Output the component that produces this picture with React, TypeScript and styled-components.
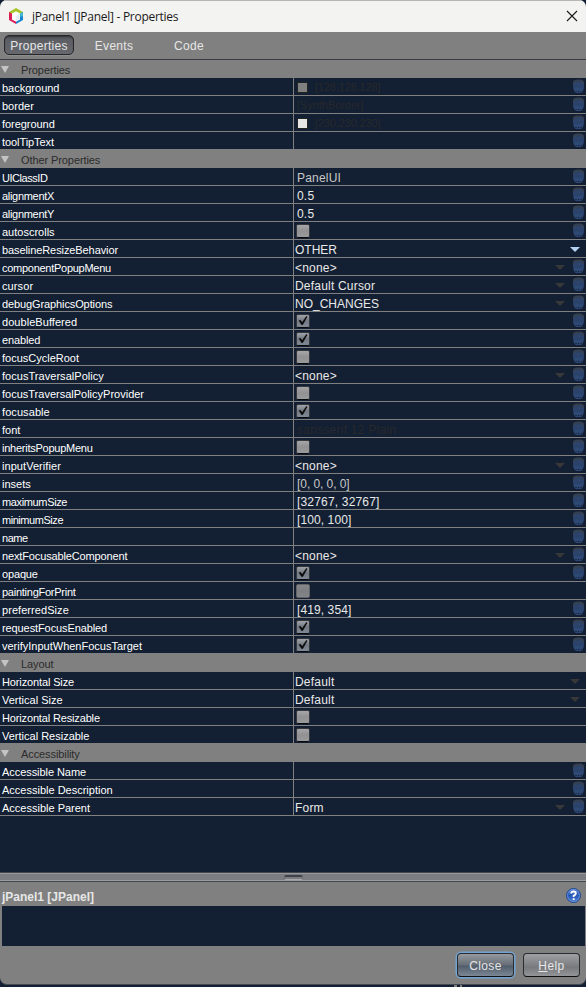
import React from "react";
import styled, { createGlobalStyle, css } from "styled-components";

const navy = "#131f32";
const gray = "#808080";

const Global = createGlobalStyle`
  html, body { margin: 0; padding: 0; background: ${navy}; }
  * { box-sizing: border-box; }
  body { font-family: "Liberation Sans", Arial, sans-serif; overflow: hidden; }
`;

const Page = styled.div`
  width: 586px;
  height: 987px;
  background: ${navy};
  overflow: hidden;
`;

const Dialog = styled.main`
  width: 586px;
  height: 985px;
  display: flex;
  flex-direction: column;
  overflow: hidden;
  border-radius: 7px;
  border-bottom: 1px solid #454a52;
  background: ${gray};
`;

const TitleBar = styled.header`
  height: 32px;
  flex: none;
  display: flex;
  align-items: center;
  padding: 0 8px 2px;
  border-top: 1px solid #b5b5b5;
  background: #f3f3f2;
`;

const Title = styled.h1`
  flex: 1;
  margin: 2px 0 0 8px;
  color: #1a1a1a;
  font: 400 12px/16px "Open Sans", "Noto Sans", sans-serif;
  letter-spacing: -0.28px;
`;

const CloseIcon = styled.button`
  display: flex;
  padding: 0;
  border: 0;
  background: none;
`;

const Tabs = styled.nav`
  height: 28px;
  flex: none;
  display: flex;
  align-items: flex-start;
  padding: 3px 4px 0;
  border-bottom: 1px solid #393d43;
`;

const Tab = styled.button<{ $active?: boolean; $width: number }>`
  width: ${(p) => p.$width}px;
  height: 20px;
  padding: 1px 0 0;
  border: 1px solid transparent;
  border-radius: 5px;
  background: transparent;
  color: #e6e6e6;
  font: 12px/18px "Liberation Sans", Arial, sans-serif;
  letter-spacing: 0.28px;
  ${(p) =>
    p.$active &&
    css`
      border-color: #26282c;
      background: linear-gradient(#4a4c51, #5c5e64 20%, #66686e);
      box-shadow: inset 0 1px 1px #36383c, 0 1px 0 #8d8d8d;
    `}
`;

const Sheet = styled.section`
  height: 812px;
  flex: none;
  background: ${navy};
`;

const GroupHeader = styled.h2`
  height: 18px;
  margin: 0;
  display: flex;
  align-items: center;
  padding: 2px 0 0 1px;
  background: ${gray};
  color: #2b2b2b;
  font: 400 11px/16px "Liberation Sans", Arial, sans-serif;
  letter-spacing: -0.09px;
`;

const GroupArrow = styled.span`
  width: 0;
  height: 0;
  margin: 0 12px 2px 0;
  border: solid transparent;
  border-width: 7px 4px 0;
  border-top-color: #c4c4c4;
`;

const Row = styled.div`
  height: 18px;
  display: grid;
  grid-template: 17px / 293px 1fr;
  border-bottom: 1px solid ${gray};
`;

const Name = styled.div<{ $spacing: number }>`
  padding: 2px 0 0 2px;
  color: #fff;
  font-size: 11px;
  line-height: 16px;
  white-space: nowrap;
  letter-spacing: ${(p) => p.$spacing}px;
`;

const Value = styled.div`
  height: 17px;
  display: flex;
  border-left: 1px solid ${gray};
`;

const ValueText = styled.span<{ $inset: number; $tone: string; $spacing: number; $small?: boolean }>`
  flex: 1;
  padding-left: ${(p) => p.$inset}px;
  color: ${(p) => p.$tone};
  font-size: ${(p) => (p.$small ? 11 : 12)}px;
  line-height: ${(p) => (p.$small ? 19 : 20)}px;
  letter-spacing: ${(p) => p.$spacing}px;
  white-space: nowrap;
`;

const Swatch = styled.span<{ $color: string }>`
  width: 11px;
  height: 11px;
  margin: 4px 0 0 3px;
  border: 1px solid #242424;
  background: ${(p) => p.$color};
`;

const Check = styled.span`
  width: 14px;
  height: 15px;
  margin: 2px auto 0 2px;
`;

const DropArrow = styled.span<{ $active?: boolean; $end: number }>`
  width: 0;
  height: 0;
  margin: 7px ${(p) => p.$end}px 0 0;
  border: solid transparent;
  border-width: 5px 5px 0;
  border-top-color: ${(p) => (p.$active ? "#b5d3f1" : "#383838")};
`;

const Bulb = styled.span`
  width: 14px;
  height: 17px;
`;

const Splitter = styled.div`
  height: 10px;
  flex: none;
  display: flex;
  justify-content: center;
  align-items: center;
  border: solid #42464d;
  border-width: 1px 0;
  background: linear-gradient(#96989c 0 1px, #7b7d82 1px 7px, #9b9da0 7px);
`;

const Grip = styled.span`
  width: 19px;
  height: 5px;
  border: 1px solid #666a71;
  border-top: 2px solid #3f4248;
  border-bottom-color: #a8a8a8;
  border-radius: 2px;
`;

const InfoHeader = styled.div`
  height: 24px;
  flex: none;
  display: flex;
  justify-content: space-between;
  align-items: flex-start;
  padding: 5px 4px 0 2px;
`;

const InfoTitle = styled.strong`
  color: #e6e6e6;
  font-size: 12px;
  line-height: 20px;
`;

const Description = styled.div`
  height: 40px;
  flex: none;
  margin: 0 1px 0 2px;
  background: ${navy};
`;

const Actions = styled.footer`
  display: flex;
  justify-content: flex-end;
  gap: 9px;
  padding: 7px 6px 0 0;
`;

const Action = styled.button<{ $primary?: boolean }>`
  width: 57px;
  height: 24px;
  padding: 2px 0 0;
  border: 1px solid #292c31;
  border-bottom-color: #0d0f12;
  border-radius: 4px;
  background: linear-gradient(#a0a0a2, #86878a 40%, #77797d 60%, #949598);
  color: #e6e6e6;
  font: 12px/20px "Liberation Sans", Arial, sans-serif;
  letter-spacing: 0.4px;
  ${(p) =>
    p.$primary &&
    css`
      background: linear-gradient(#969a9f, #686f78 48%, #515d6b 55%, #7b8794);
      box-shadow: 0 0 0 1.5px #73a4d1;
    `}
`;

const Backdrop = styled.div`
  height: 2px;
  display: flex;
  gap: 3px;
  padding-left: 454px;
`;

const SashLine = styled.span<{ $width: number }>`
  width: ${(p) => p.$width}px;
  background: ${gray};
`;

type BoxState = "on" | "off" | "disabled";

const boxFill: Record<BoxState, [string, string, string]> = {
  on: ["#a3a6aa", "#737a84", "#808a96"],
  off: ["#a8a8a9", "#919193", "#9a9b9d"],
  disabled: ["#86878a", "#7d7e82", "#84868a"],
};

function CheckBox({ state }: { state: BoxState }) {
  const [top, middle, bottom] = boxFill[state];
  const disabled = state === "disabled";
  return (
    <Check>
      <svg width="14" height="15" viewBox="0 0 14 15" display="block">
        <defs>
          <linearGradient id={`box-${state}`} x1="0" y1="0" x2="0" y2="1">
            <stop offset="0" stopColor={top} />
            <stop offset=".5" stopColor={middle} />
            <stop offset="1" stopColor={bottom} />
          </linearGradient>
        </defs>
        <rect x=".5" y=".5" width="13" height="13" rx="1.5" fill={`url(#box-${state})`} stroke={disabled ? "#606368" : "#34373c"} />
        {!disabled && <path d="M1.5 13.5h11" stroke="#07090d" />}
        {state === "on" && (
          <path d="M3 6.8l1.3-.7 1.9 2.3 4.2-6.1.8.5-4.5 7.9H5.7z" fill="#080808" stroke="#080808" strokeWidth=".4" />
        )}
      </svg>
    </Check>
  );
}

function BulbIcon() {
  return (
    <Bulb>
      <svg width="14" height="17" viewBox="0 0 14 17" display="block">
        <defs>
          <linearGradient id="bulb" x1="0" y1="0" x2="0" y2="1">
            <stop offset="0" stopColor="#303d53" />
            <stop offset=".3" stopColor="#2d456d" />
            <stop offset=".52" stopColor="#2a4169" />
            <stop offset=".7" stopColor="#2f4a78" />
            <stop offset="1" stopColor="#2b446f" />
          </linearGradient>
        </defs>
        <path d="M1.2 9.5q.3 2.3 1.3 3.5.2 2.7 1.8 2.7h4.4q1.6 0 1.8-2.7 1-1.2 1.3-3.5" fill="#0c1422" stroke="#0c1422" strokeWidth=".8" />
        <path d="M4.2 1.8h4.6Q12 2.2 12 5v4q0 2-1 3.8-.4 2.4-2.2 2.4H4.2Q2.400 15.200 2 12.800 1 11 1 9V5q0-2.800 3.200-3.200z" fill="url(#bulb)" />
        <path d="M1.5 6V5Q1.600 2.500 4.300 2.200h4.400q2.700.3 2.800 2.800v1" fill="none" stroke="#3d3f43" strokeWidth=".9" />
        <path d="M3.500 13h1v1h-1zm5 0h1v1h-1zM6 13h1v1H6z" fill="#111c30" />
      </svg>
    </Bulb>
  );
}

function LogoIcon() {
  return (
    <svg width="16" height="18" viewBox="0 0 16 18">
      <path d="M8 1l7 4v4L8 6 1 9V5z" fill="#a7c52b" />
      <path d="M1 5l3 1.7v5.7l4 2.2V17l-7-4z" fill="#de1c55" />
      <path d="M8 17l7-4V5l-3 1.7v5.7l-4 2.2z" fill="#1982cf" />
      <path d="M12 6.5L15 5v4l-3 1z" fill="#46b5d1" />
      <path d="M8 4.3l4 2.3v5.6l-4 2.4-4-2.4V6.6z" fill="#fff" />
      <path d="M8 9l4-2.4v5.6l-4 2.4z" fill="#e2eff4" />
    </svg>
  );
}

function HelpIcon() {
  return (
    <svg width="16" height="17" viewBox="0 0 16 17">
      <defs>
        <linearGradient id="help" x1="0" y1="0" x2="0" y2="1">
          <stop offset="0" stopColor="#5683d3" />
          <stop offset=".5" stopColor="#2858b5" />
          <stop offset="1" stopColor="#4e82d9" />
        </linearGradient>
      </defs>
      <circle cx="7.5" cy="8.5" r="7" fill="url(#help)" stroke="#1e4791" />
      <circle cx="7.5" cy="8.5" r="6" fill="none" stroke="#83a7e2" strokeWidth=".6" />
      <path d="M5.2 6.5Q5.3 4.5 7.5 4.5t2.3 1.9Q9.8 7.7 7.7 8.7V10" fill="none" stroke="#fff" strokeWidth="1.9" />
      <path d="M6.7 11.3h2v1.8h-2z" fill="#fff" />
    </svg>
  );
}

type Item = {
  name: string;
  /** Letter spacing of the name, in pixels. */
  track?: number;
  kind?: "text" | "select" | "check";
  value?: string;
  valueTrack?: number;
  state?: BoxState;
  swatch?: string;
  faint?: boolean;
  small?: boolean;
  bulb?: boolean;
  active?: boolean;
  muted?: boolean;
};

const groups: { title: string; items: Item[] }[] = [
  {
    title: "Properties",
    items: [
      { name: "background", value: "[128,128,128]", valueTrack: -0.15, swatch: gray, faint: true, small: true },
      { name: "border", value: "[SynthBorder]", valueTrack: -0.05, faint: true, small: true },
      { name: "foreground", track: -0.05, value: "[230,230,230]", valueTrack: -0.15, swatch: "#e6e6e6", faint: true, small: true },
      { name: "toolTipText", track: -0.08 },
    ],
  },
  {
    title: "Other Properties",
    items: [
      { name: "UIClassID", track: -0.45, value: "PanelUI", muted: true },
      { name: "alignmentX", track: -0.3, value: "0.5" },
      { name: "alignmentY", track: -0.3, value: "0.5" },
      { name: "autoscrolls", kind: "check" },
      { name: "baselineResizeBehavior", track: -0.09, kind: "select", value: "OTHER", valueTrack: 0, active: true, bulb: false },
      { name: "componentPopupMenu", track: -0.27, kind: "select", value: "<none>" },
      { name: "cursor", track: 0.1, kind: "select", value: "Default Cursor" },
      { name: "debugGraphicsOptions", track: -0.11, kind: "select", value: "NO_CHANGES", valueTrack: 0 },
      { name: "doubleBuffered", track: 0.05, kind: "check", state: "on" },
      { name: "enabled", track: -0.13, kind: "check", state: "on" },
      { name: "focusCycleRoot", kind: "check" },
      { name: "focusTraversalPolicy", track: 0.04, kind: "select", value: "<none>" },
      { name: "focusTraversalPolicyProvider", kind: "check" },
      { name: "focusable", track: 0.08, kind: "check", state: "on" },
      { name: "font", value: "sansserif 12 Plain", valueTrack: 0.25, faint: true },
      { name: "inheritsPopupMenu", track: -0.25, kind: "check" },
      { name: "inputVerifier", track: 0.06, kind: "select", value: "<none>" },
      { name: "insets", value: "[0, 0, 0, 0]", valueTrack: -0.06, muted: true },
      { name: "maximumSize", track: -0.36, value: "[32767, 32767]", valueTrack: 0.18 },
      { name: "minimumSize", track: -0.45, value: "[100, 100]", valueTrack: 0.1 },
      { name: "name", track: -0.45 },
      { name: "nextFocusableComponent", track: -0.14, kind: "select", value: "<none>" },
      { name: "opaque", track: -0.15, kind: "check", state: "on" },
      { name: "paintingForPrint", track: -0.25, kind: "check", state: "disabled", bulb: false },
      { name: "preferredSize", track: 0.06, value: "[419, 354]", valueTrack: 0.1 },
      { name: "requestFocusEnabled", track: -0.1, kind: "check", state: "on" },
      { name: "verifyInputWhenFocusTarget", kind: "check", state: "on" },
    ],
  },
  {
    title: "Layout",
    items: [
      { name: "Horizontal Size", track: -0.13, kind: "select", value: "Default", bulb: false },
      { name: "Vertical Size", kind: "select", value: "Default", bulb: false },
      { name: "Horizontal Resizable", track: -0.15, kind: "check", bulb: false },
      { name: "Vertical Resizable", kind: "check", bulb: false },
    ],
  },
  {
    title: "Accessibility",
    items: [
      { name: "Accessible Name", track: -0.06 },
      { name: "Accessible Description" },
      { name: "Accessible Parent", kind: "select", value: "Form" },
    ],
  },
];

function PropertyRow({ item }: { item: Item }) {
  const hasBulb = item.bulb !== false;
  const inset = item.swatch ? 7 : item.kind === "select" ? 1 : 3;
  const tone = item.faint ? "#27292c" : item.muted ? "#c8c8c8" : "#e9e9e9";
  return (
    <Row>
      <Name $spacing={item.track ?? 0}>{item.name}</Name>
      <Value>
        {item.swatch && <Swatch $color={item.swatch} />}
        {item.kind === "check" ? (
          <CheckBox state={item.state ?? "off"} />
        ) : (
          <ValueText $inset={inset} $tone={tone} $spacing={item.valueTrack ?? 0.2} $small={item.small}>
            {item.value}
          </ValueText>
        )}
        {item.kind === "select" && <DropArrow $active={item.active} $end={hasBulb ? 7 : 6} />}
        {hasBulb && <BulbIcon />}
      </Value>
    </Row>
  );
}

export default function App() {
  return (
    <Page>
      <Global />
      <Dialog>
        <TitleBar>
          <LogoIcon />
          <Title>jPanel1 [JPanel] - Properties</Title>
          <CloseIcon aria-label="Close window">
            <svg width="12" height="12" viewBox="0 0 12 12">
              <path d="M1 1l10 10M11 1L1 11" stroke="#191919" strokeWidth="1.1" />
            </svg>
          </CloseIcon>
        </TitleBar>
        <Tabs>
          <Tab $active $width={70}>Properties</Tab>
          <Tab $width={80}>Events</Tab>
          <Tab $width={70}>Code</Tab>
        </Tabs>
        <Sheet>
          {groups.map((g) => (
            <React.Fragment key={g.title}>
              <GroupHeader>
                <GroupArrow />
                {g.title}
              </GroupHeader>
              {g.items.map((item) => (
                <PropertyRow key={item.name} item={item} />
              ))}
            </React.Fragment>
          ))}
        </Sheet>
        <Splitter>
          <Grip />
        </Splitter>
        <InfoHeader>
          <InfoTitle>jPanel1 [JPanel]</InfoTitle>
          <HelpIcon />
        </InfoHeader>
        <Description />
        <Actions>
          <Action $primary>Close</Action>
          <Action>
            <u>H</u>elp
          </Action>
        </Actions>
      </Dialog>
      <Backdrop>
        <SashLine $width={3} />
        <SashLine $width={2} />
      </Backdrop>
    </Page>
  );
}
